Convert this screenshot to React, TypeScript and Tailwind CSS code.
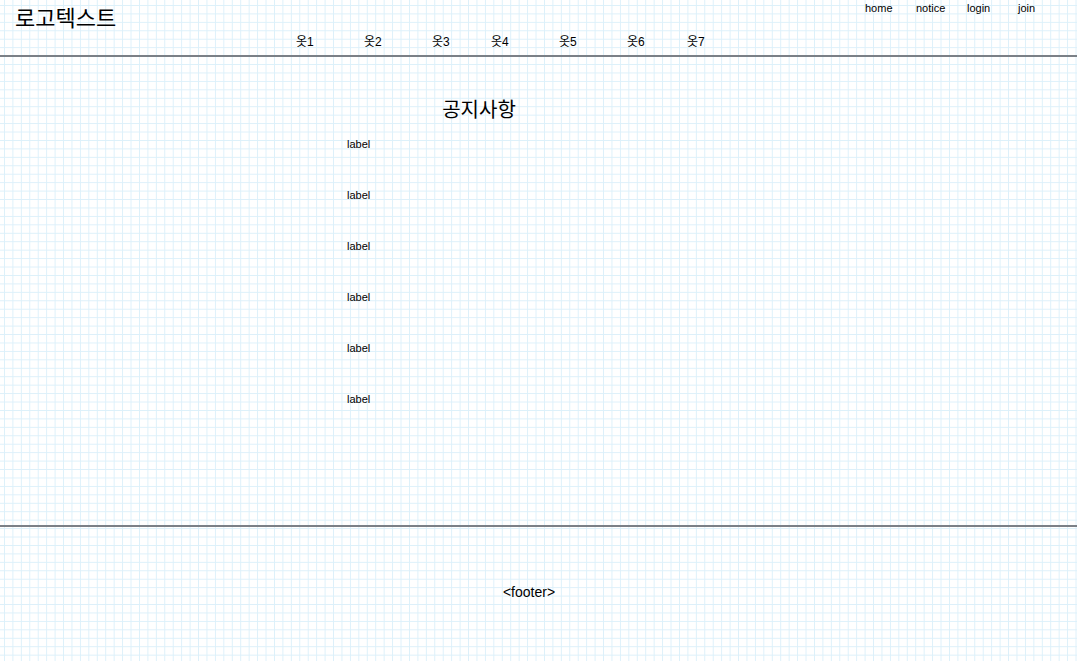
import React from 'react';

const menus = [
  { name: '옷1', w: 'w-[68px]' },
  { name: '옷2', w: 'w-[68px]' },
  { name: '옷3', w: 'w-[59px]' },
  { name: '옷4', w: 'w-[68px]' },
  { name: '옷5', w: 'w-[68px]' },
  { name: '옷6', w: 'w-[60px]' },
  { name: '옷7', w: 'w-[40px]' },
];

const topLinks = ['home', 'notice', 'login', 'join'];

const App: React.FC = () => {
  return (
    <div
      className="min-h-[661px] w-full text-black bg-white bg-[linear-gradient(to_right,#dcf0fa_1px,transparent_1px),linear-gradient(to_bottom,#dcf0fa_1px,transparent_1px)] bg-[size:8.45px_8.45px] bg-[position:4px_5px]"
      style={{ fontFamily: '"Liberation Sans", "Noto Sans CJK KR", Arial, sans-serif' }}
    >
      <header className="h-[57px] border-b-2 border-[#7b8087] flex flex-col">
        <div className="h-[35px] flex justify-between">
          <h1 className="pl-[15px] pt-[6px] text-[22px] leading-[26px]">로고텍스트</h1>
          <ul className="flex pt-[2px] pr-[8px] text-[11px] leading-[13px]">
            {topLinks.map((l) => (
              <li key={l} className="w-[51px]">{l}</li>
            ))}
          </ul>
        </div>
        <nav className="flex pl-[296px] text-[12px] leading-[14px]">
          {menus.map((m) => (
            <div key={m.name} className={m.w}>{m.name}</div>
          ))}
        </nav>
      </header>

      <main className="h-[470px] border-b-2 border-[#7b8087]">
        <h2 className="pt-[41px] text-center text-[20px] leading-[24px] w-[958px]">공지사항</h2>
        <div className="pl-[347px] pt-[15px] flex flex-col gap-[37px] text-[11px] leading-[14px]">
          {Array.from({ length: 6 }).map((_, i) => (
            <div key={i}>label</div>
          ))}
        </div>
      </main>

      <footer className="h-[134px] pt-[57px] text-center text-[14px] leading-[16px] w-[1058px]">
        &lt;footer&gt;
      </footer>
    </div>
  );
};

export default App;
